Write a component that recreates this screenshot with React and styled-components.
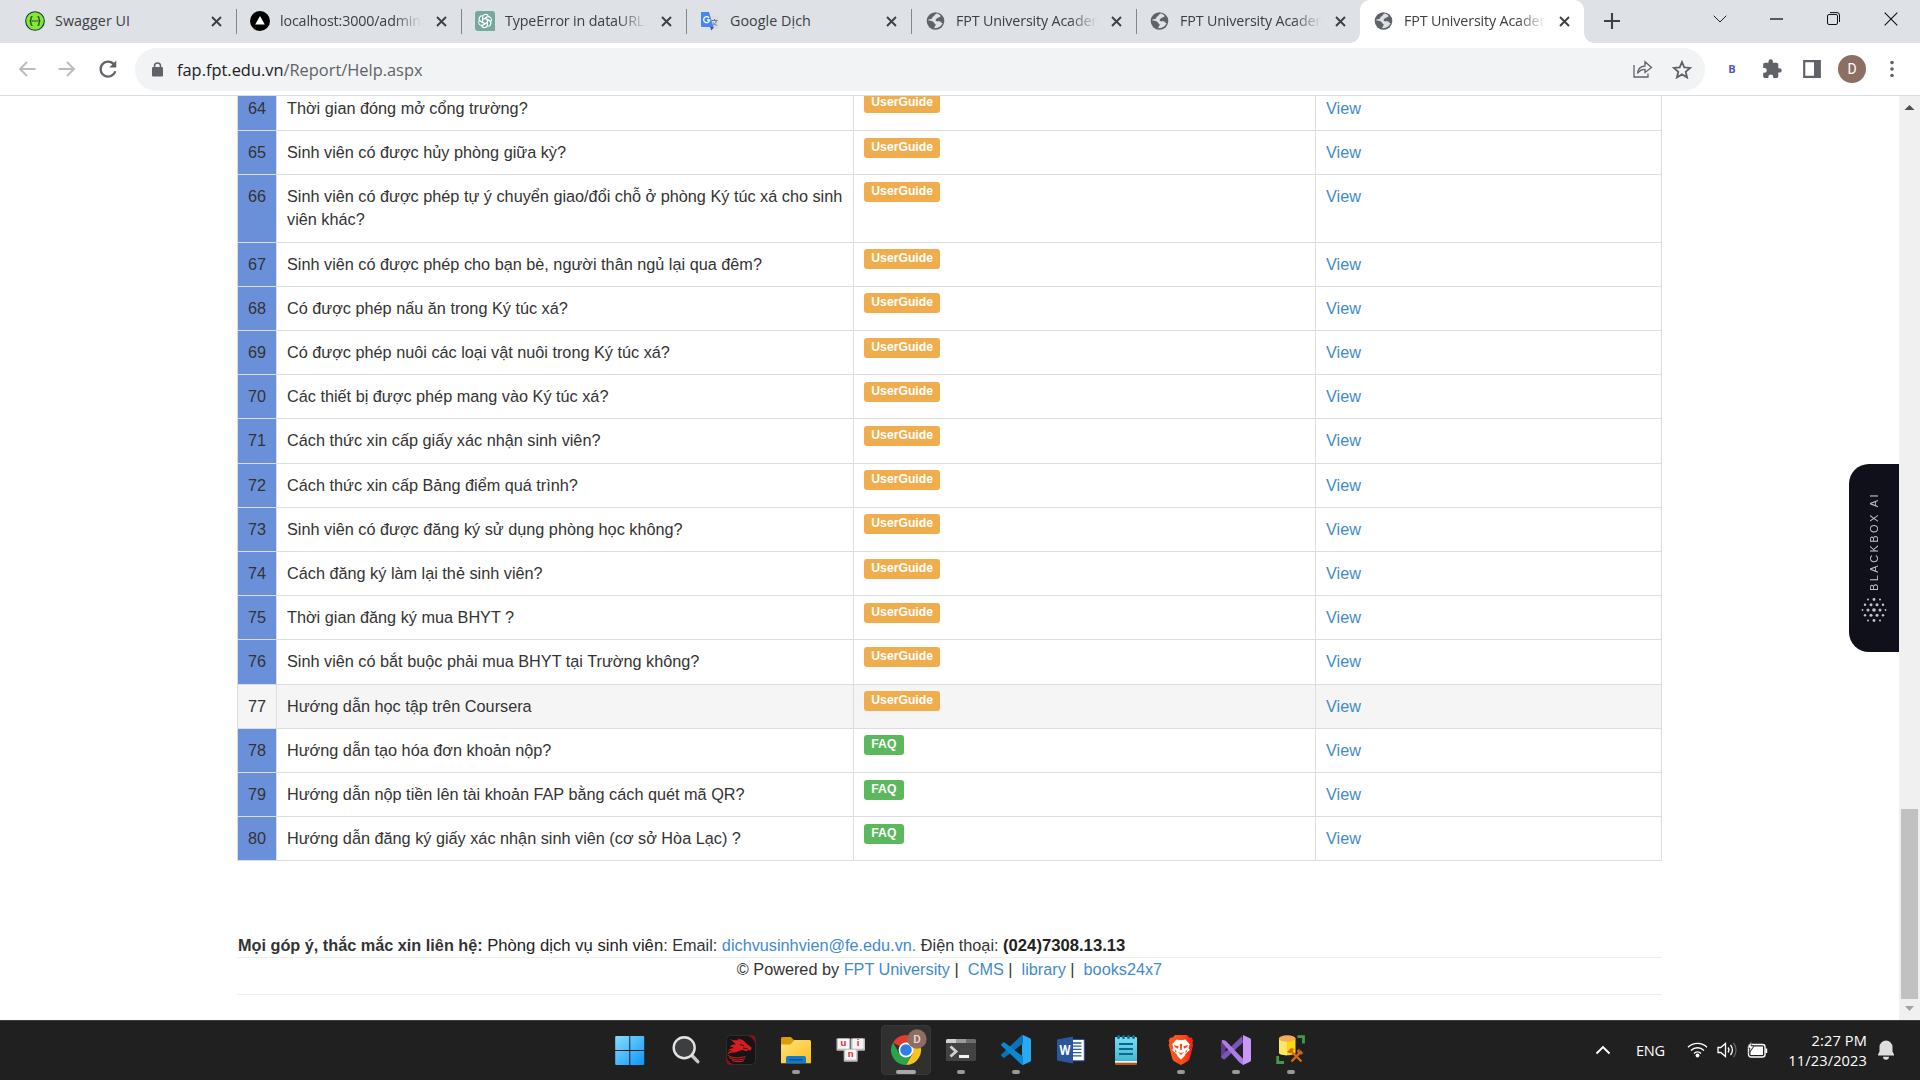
import React from "react";
import styled, { createGlobalStyle } from "styled-components";

const GlobalStyle = createGlobalStyle`
  * { box-sizing: border-box; }
  body { margin: 0; overflow: hidden; background: #fff; }
`;

const UI_FONT = '"Open Sans", "Noto Sans", sans-serif';

const Screen = styled.div`
  width: 1920px;
  height: 1080px;
  display: flex;
  flex-direction: column;
  overflow: hidden;
  font-family: "Liberation Sans", Arial, sans-serif;
`;

/* ---------- tab strip ---------- */

const TabStrip = styled.div`
  height: 43px;
  flex: none;
  display: flex;
  background: #dee1e6;
  font-family: ${UI_FONT};
`;

const Tab = styled.div`
  position: relative;
  width: ${(p) => p.$width}px;
  height: 43px;
  flex: none;
  display: flex;
  align-items: center;
  padding: 0 12px 1px ${(p) => p.$indent}px;
  border-radius: ${(p) => (p.$active ? "10px 10px 0 0" : "0")};
  background: ${(p) => (p.$active ? "#fff" : "transparent")};

  ${(p) =>
    p.$active &&
    `
    &::before, &::after {
      content: "";
      position: absolute;
      bottom: 0;
      width: 10px;
      height: 10px;
    }
    &::before { left: -10px; background: radial-gradient(circle at 0 0, transparent 9.5px, #fff 10px); }
    &::after { right: -10px; background: radial-gradient(circle at 100% 0, transparent 9.5px, #fff 10px); }
  `}
`;

const TabDivider = styled.div`
  width: 1px;
  height: 25px;
  margin-top: 9px;
  flex: none;
  background: #83868b;
`;

const Favicon = styled.svg`
  width: 20px;
  height: 20px;
  flex: none;
  margin-right: 10px;
`;

const TabTitle = styled.div`
  width: 142px;
  overflow: hidden;
  white-space: nowrap;
  font-size: 14.3px;
  letter-spacing: ${(p) => (p.$spacing === undefined ? -0.15 : p.$spacing)}px;
  line-height: 24px;
  color: #3c4043;
  ${(p) => p.$fade && "mask-image: linear-gradient(90deg, #000 80%, transparent 100%);"}
`;

const CloseIcon = styled.svg`
  width: 11px;
  height: 11px;
  flex: none;
  margin-left: auto;
  margin-right: 2px;
`;

const NewTab = styled.svg`
  width: 16px;
  height: 16px;
  margin: 13px 0 0 20px;
`;

const WindowButtons = styled.div`
  display: flex;
  margin-left: auto;
  margin-right: 1px;
  height: 37px;
  align-items: center;
`;

const WindowButton = styled.div`
  width: 57px;
  display: flex;
  justify-content: center;
`;

/* ---------- toolbar ---------- */

const Toolbar = styled.div`
  height: 53px;
  flex: none;
  display: flex;
  align-items: center;
  padding: 0 8px 0 18px;
  background: #fff;
  border-bottom: 1px solid #dadce0;
  font-family: ${UI_FONT};
`;

const NavButtons = styled.div`
  width: 117px;
  display: flex;
  gap: 22px;
  align-items: center;
`;

const AddressBar = styled.div`
  width: 1570px;
  height: 43px;
  display: flex;
  align-items: center;
  padding: 0 13px 0 17px;
  border-radius: 22px;
  background: #f1f3f4;
`;

const Url = styled.div`
  flex: 1;
  margin-left: 14px;
  padding-top: 1px;
  font-size: 16.4px;
  letter-spacing: 0;
  line-height: 24px;
  white-space: nowrap;
  color: #5f6368;

  b { font-weight: 400; color: #202124; }
`;

const AddressActions = styled.div`
  display: flex;
  gap: 19px;
  align-items: center;
`;

const Extensions = styled.div`
  margin-left: 7px;
  display: flex;
  align-items: center;
`;

const ExtensionSlot = styled.div`
  width: 40px;
  display: flex;
  justify-content: center;
`;

const ExtensionLetter = styled.span`
  width: 20px;
  text-align: center;
  font: 700 11px/20px "Open Sans", sans-serif;
  color: #5a52c8;
`;

const Avatar = styled.span`
  width: 28px;
  height: 28px;
  border-radius: 50%;
  background: #8d6e63;
  color: #fff;
  text-align: center;
  font: 400 14px/28px Roboto, sans-serif;
`;

/* ---------- page ---------- */

const Viewport = styled.div`
  position: relative;
  height: 924px;
  flex: none;
  display: flex;
  overflow: hidden;
  background: #fff;
`;

const Content = styled.div`
  width: 1899px;
  padding-left: 237px;
`;

const TableClip = styled.div`
  width: 1425px;
  height: 765.4px;
  display: flex;
  flex-direction: column;
  justify-content: flex-end;
  overflow: hidden;
`;

const Table = styled.div`
  width: 1425px;
  border-left: 1px solid #ddd;
  font-size: 16.25px;
  line-height: 23.21px;
  color: #333;
`;

const Row = styled.div`
  display: grid;
  grid-template-columns: 39px 577px 462px 346px;
  border-bottom: 1px solid #ddd;
  background: ${(p) => (p.$hover ? "#f5f5f5" : "#fff")};
`;

const Cell = styled.div`
  padding: 10px;
  border-right: 1px solid #ddd;
`;

const NumberCell = styled(Cell)`
  background: ${(p) => (p.$hover ? "#f5f5f5" : "#6b90da")};
`;

const TagCell = styled(Cell)`
  padding-top: 8px;
  line-height: 12px;
`;

const Tag = styled.span`
  font-size: 12.19px;
  font-weight: 700;
  line-height: 1;
  padding: 0.2em 0.6em 0.3em;
  border-radius: 0.25em;
  color: #fff;
  background: ${(p) => (p.$kind === "FAQ" ? "#5cb85c" : "#f0ad4e")};
`;

const Link = styled.a`
  color: #428bca;
`;

const Footer = styled.div`
  width: 1425px;
  margin-top: 72.6px;
  font-size: 16.25px;
  line-height: 23px;
  color: #333;
`;

const Contact = styled.div`
  height: 24px;
  padding-left: 1px;
  border-bottom: 1px solid #eee;
  white-space: pre;
`;

const Strong = styled.span`
  font-size: 16.67px;
  font-weight: ${(p) => (p.$bold ? 700 : 400)};
  color: #222;
`;

const Powered = styled.div`
  height: 37px;
  border-bottom: 1px solid #eee;
  text-align: center;
  white-space: pre;
`;

const ScrollTrack = styled.div`
  width: 21px;
  height: 924px;
  flex: none;
  display: flex;
  flex-direction: column;
  align-items: center;
  background: #f0f0f0;
`;

const ScrollArrow = styled.svg`
  width: 21px;
  height: 21px;
  flex: none;
`;

const ScrollThumb = styled.div`
  width: 17px;
  height: 190px;
  margin-top: 692px;
  background: #c1c1c1;
`;

const Blackbox = styled.div`
  position: absolute;
  right: 21px;
  top: 368px;
  width: 50px;
  height: 188px;
  display: flex;
  flex-direction: column;
  align-items: center;
  padding: 27px 0 0 0;
  border-radius: 20px 0 0 20px;
  background: #0f101a;
`;

const BlackboxLabel = styled.div`
  height: 100px;
  writing-mode: vertical-rl;
  transform: rotate(180deg);
  white-space: nowrap;
  font: 400 11px/14px "Liberation Sans", sans-serif;
  letter-spacing: 2.45px;
  color: #c4c4c8;
`;

/* ---------- taskbar ---------- */

const Taskbar = styled.div`
  height: 60px;
  flex: none;
  display: flex;
  background: #202020;
  border-top: 1px solid #3b3d3d;
  color: #fff;
  font-family: ${UI_FONT};
`;

const Apps = styled.div`
  display: flex;
  margin-left: 603px;
`;

const AppSlot = styled.div`
  width: 55px;
  height: 59px;
  display: flex;
  flex-direction: column;
  align-items: center;
  padding-top: 4px;
`;

const AppTile = styled.div`
  width: 50px;
  height: 50px;
  display: flex;
  flex-direction: column;
  align-items: center;
  padding-top: 10px;
  border-radius: 5px;
  background: ${(p) => (p.$active ? "#303030" : "transparent")};
  box-shadow: ${(p) => (p.$active ? "inset 0 0 0 1px #383838" : "none")};
`;

const AppIcon = styled.svg`
  width: 30px;
  height: 30px;
  flex: none;
  overflow: visible;
`;

const RunMark = styled.div`
  width: ${(p) => (p.$active ? 20 : 8)}px;
  height: 4px;
  margin-top: 5px;
  border-radius: 2px;
  background: ${(p) => (p.$active ? "#aaa7a4" : "#999")};
`;

const Tray = styled.div`
  margin-left: auto;
  width: 325px;
  height: 57px;
  display: flex;
  align-items: center;
`;

const Language = styled.div`
  width: 30px;
  margin-left: 25px;
  font-size: 14.6px;
  letter-spacing: -0.3px;
`;

const TrayIcons = styled.div`
  display: flex;
  align-items: center;
  gap: 9px;
  margin-left: 21px;
`;

const Clock = styled.div`
  width: 86px;
  margin-left: 12px;
  text-align: right;
  font-size: 14.6px;
  line-height: 20px;
  letter-spacing: 0.12px;
`;

/* ---------- drawings ---------- */

const Globe = () => (
  <Favicon viewBox="0 0 20 20">
    <circle cx="9.5" cy="10" r="8.8" fill="#5f6368" />
    <path d="M11 2.5c-2.8.8-2 2.6-3.8 3.1-1.4.5-.5 2-1.9 2.4-1.6.4-2.6 0-3.2 1.2 2 .7 5.200.5 5.700 2.400.4 1.400 2.200 1 1.800 2.600-.3 1.100-1.500 1.500-1.300 2.900 3.700.4 7-1.500 8.200-4.800-1.600-.3-1.500-1.900-3.200-2-1.600-.1-2.900.4-3.500-.9-.6-1.400 1-1.700 1.700-2.400.7-.8 2.700-.3 3.200-1.900-.8-1.300-2.100-2.200-3.700-2.600z" fill="#dee1e6" />
  </Favicon>
);

const favicons = {
  swagger: (
    <Favicon viewBox="0 0 20 20">
      <circle cx="10" cy="10" r="9.300" fill="#85ea2d" stroke="#173647" strokeWidth="1.100" />
      <path d="M7.500 5.500c-1.600 0-1.600 1-1.500 2.200.1 1.200-.2 2.200-1.400 2.300 1.200.1 1.500 1.100 1.400 2.300-.1 1.200-.1 2.200 1.500 2.200M12.500 5.500c1.600 0 1.600 1 1.500 2.200-.1 1.200.2 2.200 1.400 2.300-1.200.1-1.500 1.100-1.400 2.300.1 1.200.1 2.200-1.500 2.200" fill="none" stroke="#173647" strokeWidth="1.200" />
      <path d="M7.300 10h1.200M9.400 10h1.200M11.500 10h1.200" stroke="#173647" strokeWidth="1.300" />
    </Favicon>
  ),
  next: (
    <Favicon viewBox="0 0 20 20">
      <circle cx="10" cy="10" r="10" />
      <path d="M10 5l4.800 8.500H5.200z" fill="#fff" />
    </Favicon>
  ),
  gpt: (
    <Favicon viewBox="0 0 20 20">
      <path d="M3 0h14a3 3 0 0 1 3 3v17H3a3 3 0 0 1-3-3V3a3 3 0 0 1 3-3z" fill="#75a99c" />
      <g fill="none" stroke="#fff" strokeWidth="1.100">
        {[0, 60, 120, 180, 240, 300].map((a) => (
          <path key={a} transform={`rotate(${a} 10 10)`} d="M7.600 11.400V6.300c0-3.200 4.600-4 5.700-1.100M7.600 8.600L12 6" />
        ))}
      </g>
    </Favicon>
  ),
  translate: (
    <Favicon viewBox="0 0 20 20">
      <path d="M8 5h10.500v13.500H11z" fill="#dcdcdc" />
      <path d="M11.500 9.500h6M14.500 8v1.500M16.500 9.500c-.5 2.500-2 4-4 5M13 11.500c.8 1.300 2 2.300 4 3" stroke="#607d8b" strokeWidth="1" fill="none" />
      <path d="M10 16h4l-2.500 3.500z" fill="#3451c6" />
      <path d="M1 1h8l4.500 15H1.800A.8.800 0 0 1 1 15z" fill="#4688f1" />
      <path d="M9 6.800A3 3 0 1 0 9.600 9H7" fill="none" stroke="#fff" strokeWidth="1.300" />
    </Favicon>
  ),
  globe: <Globe />,
};

const Close = () => (
  <CloseIcon viewBox="0 0 11 11">
    <path d="M1 1l9 9M10 1l-9 9" stroke="#3c4043" strokeWidth="1.900" />
  </CloseIcon>
);

const tabs = [
  { icon: "swagger", title: "Swagger UI", width: 236, indent: 25, spacing: 0.08 },
  { icon: "next", title: "localhost:3000/admin", width: 224, indent: 13, fade: true },
  { icon: "gpt", title: "TypeError in dataURL:", width: 224, indent: 13, fade: true },
  { icon: "translate", title: "Google Dịch", width: 224, indent: 13, spacing: 0.05 },
  { icon: "globe", title: "FPT University Academic", width: 224, indent: 14, fade: true },
  { icon: "globe", title: "FPT University Academic", width: 223, indent: 13, fade: true },
  { icon: "globe", title: "FPT University Academic", width: 224, indent: 14, fade: true, active: true },
];

const rows = [
  [64, "Thời gian đóng mở cổng trường?"],
  [65, "Sinh viên có được hủy phòng giữa kỳ?"],
  [66, "Sinh viên có được phép tự ý chuyển giao/đổi chỗ ở phòng Ký túc xá cho sinh viên khác?"],
  [67, "Sinh viên có được phép cho bạn bè, người thân ngủ lại qua đêm?"],
  [68, "Có được phép nấu ăn trong Ký túc xá?"],
  [69, "Có được phép nuôi các loại vật nuôi trong Ký túc xá?"],
  [70, "Các thiết bị được phép mang vào Ký túc xá?"],
  [71, "Cách thức xin cấp giấy xác nhận sinh viên?"],
  [72, "Cách thức xin cấp Bảng điểm quá trình?"],
  [73, "Sinh viên có được đăng ký sử dụng phòng học không?"],
  [74, "Cách đăng ký làm lại thẻ sinh viên?"],
  [75, "Thời gian đăng ký mua BHYT ?"],
  [76, "Sinh viên có bắt buộc phải mua BHYT tại Trường không?"],
  [77, "Hướng dẫn học tập trên Coursera"],
  [78, "Hướng dẫn tạo hóa đơn khoản nộp?", "FAQ"],
  [79, "Hướng dẫn nộp tiền lên tài khoản FAP bằng cách quét mã QR?", "FAQ"],
  [80, "Hướng dẫn đăng ký giấy xác nhận sinh viên (cơ sở Hòa Lạc) ?", "FAQ"],
];

const Key = ({ x, y, letter }) => (
  <g>
    <rect x={x} y={y} width="14" height="12.500" rx="1" fill="#bdbdbd" />
    <rect x={x + 1.500} y={y + 0.500} width="11" height="10" rx="1" fill="#f5f5f5" />
    <text x={x + 7} y={y + 8} textAnchor="middle" fontSize="9.500" fontWeight="700" fontFamily="Liberation Sans" fill="#e8262b">{letter}</text>
  </g>
);

const apps = [
  {
    name: "start",
    art: (
      <g transform="translate(-1.300 0)">
        <linearGradient id="win" x1="0" y1="0" x2="29" y2="29" gradientUnits="userSpaceOnUse">
          <stop stopColor="#8be0ff" /><stop offset="1" stopColor="#1097f8" />
        </linearGradient>
        <path d="M.5 2A1 1 0 0 1 1.500 1H14.600V15.100H.5zM15.600 1H28.500a1 1 0 0 1 1 1V15.100H15.600zM.5 16.100H14.600V30H1.500a1 1 0 0 1-1-1zM15.600 16.100H29.500V29a1 1 0 0 1-1 1H15.600z" fill="url(#win)" />
      </g>
    ),
  },
  {
    name: "search",
    art: (
      <g fill="none" stroke="#e2e4e5">
        <path d="M20.500 20l6.300 6.700" stroke="#c6c9cc" strokeWidth="3.400" strokeLinecap="round" />
        <circle cx="13.200" cy="12.700" r="10.500" fill="#3c3e40" strokeWidth="2.400" />
      </g>
    ),
  },
  {
    name: "dragon",
    art: (
      <g>
        <rect x=".5" y=".5" width="29" height="29" rx="4" fill="#151515" stroke="#333" strokeWidth=".8" />
        <path d="M22 .7h4a3.500 3.500 0 0 1 3.500 3.500V9C28 5 26 2.500 22 .7zM.5 22c1.500 4 4 6.500 8 7.500H4a3.500 3.500 0 0 1-3.500-3.500z" fill="#8c0d1c" />
        <path d="M4 3.500c3 2.500 6 1.700 9 1.400-1-.9-2-1-3-1 3-.8 6 .3 8 2l2.500 2.700 5 4-.5 3-2.500-.6-2 1.300-4-1.300-3.500.9c-2 .8-3.500 1.700-6 1.500C4 17.500 3 18.500 1.500 19.500 2 17 4 16 6 15.600c-1.700-.5-3-.2-4.500.9C3 13.500 5 13 8 13.200 6.500 11.500 5 11.500 3.500 12c1.500-2.500 4-3 6.500-2.300C8 7 6 6.500 4 3.500z" fill="#d91c1f" />
        <path d="M1.500 20c5 4 12 3 18 1.500M3 22.500c5 3 11 3 16 1M6 25.500c4 1.500 8 1.500 12 .2" stroke="#d91c1f" strokeWidth="1" fill="none" />
        <path d="M14 9.500l4 1.300M17 13l5 1" stroke="#151515" strokeWidth=".9" />
      </g>
    ),
  },
  {
    name: "files",
    running: true,
    art: (
      <g>
        <linearGradient id="fold" x1="0" y1="0" x2="1" y2="1"><stop stopColor="#ffe17c" /><stop offset="1" stopColor="#fdbf1e" /></linearGradient>
        <path d="M0 3.500A1.500 1.500 0 0 1 1.500 2h8.300l3.300 3.200H28.500V12H0z" fill="#dc9e06" />
        <path d="M0 9.500h9.500L13.500 5H28.500A1.500 1.500 0 0 1 30 6.500V28.300H0z" fill="url(#fold)" />
        <path d="M5 28.300V23a2 2 0 0 1 2-2H23a2 2 0 0 1 2 2v5.300z" fill="#0f7bd0" />
        <path d="M8.500 24.800h13" stroke="#074c87" strokeWidth="1.300" />
      </g>
    ),
  },
  {
    name: "unikey",
    art: (
      <g>
        <Key x={0.500} y={3.300} letter="u" />
        <Key x={15} y={3.300} letter="i" />
        <Key x={7.700} y={14.200} letter="n" />
      </g>
    ),
  },
  {
    name: "chrome",
    running: true,
    active: true,
    art: (
      <g>
        <path d="M15 15L2 7.500A15 15 0 0 1 28 7.500H15z" fill="#e33b2e" />
        <path d="M15 7.500H28A15 15 0 0 1 15 30L21.500 18.700z" fill="#fcc31e" />
        <path d="M2 7.500A15 15 0 0 0 15 30l6.500-11.200L8.500 18.700z" fill="#2ba24c" />
        <circle cx="15" cy="15" r="7.400" fill="#fff" />
        <circle cx="15" cy="15" r="5.800" fill="#2f7de9" />
        <circle cx="26" cy="4" r="9.700" fill="#8d6e63" />
        <text x="26" y="8.300" textAnchor="middle" fontSize="11.500" fontFamily="Roboto" fontWeight="500" fill="#e6dedb">D</text>
      </g>
    ),
  },
  {
    name: "terminal",
    running: true,
    art: (
      <g>
        <rect x="0" y="4" width="30" height="22" rx="1.500" fill="#434343" />
        <path d="M0 8V5.500A1.500 1.500 0 0 1 1.500 4H10v4z" fill="#d0d0d0" />
        <path d="M10 4h10v4H10z" fill="#9b9b9b" />
        <path d="M20 4h8.500A1.500 1.500 0 0 1 30 5.500V8H20z" fill="#6f6f6f" />
        <path d="M4.500 11.500l5.500 5-5.500 5" fill="none" stroke="#d2d2d2" strokeWidth="2.800" />
        <path d="M13 20h10v3H13z" fill="#f2f2f2" />
      </g>
    ),
  },
  {
    name: "code",
    running: true,
    art: (
      <g>
        <path d="M22 0l7 3.200A1.800 1.800 0 0 1 30 5v20a1.800 1.800 0 0 1-1 1.800L22 30l-1-6V6z" fill="#29a9f2" />
        <path d="M22 8.500L3.700 22.500a1.300 1.300 0 0 1-1.600 0L.5 21a1.200 1.200 0 0 1 0-1.800L20.200.8A2 2 0 0 1 22 0z" fill="#0a73b8" />
        <path d="M22 21.500L3.700 7.500a1.300 1.300 0 0 0-1.600 0L.5 9a1.200 1.200 0 0 0 0 1.800L20.200 29.200A2 2 0 0 0 22 30z" fill="#0b87d0" />
      </g>
    ),
  },
  {
    name: "word",
    art: (
      <g>
        <path d="M16 4.500h11.300a1 1 0 0 1 1 1v19.300a1 1 0 0 1-1 1H16z" fill="#fff" stroke="#2b579a" />
        <path d="M17 8h8.500M17 11.200h8.500M17 14.400h8.500M17 17.600h8.500M17 20.800h8.500" stroke="#2b579a" strokeWidth="1.300" />
        <path d="M1 4.500l16-3v27l-16-3z" fill="#2b579a" />
        <text x="9" y="20" textAnchor="middle" fontSize="13.500" fontWeight="700" fontFamily="Open Sans" fill="#fff" textLength="11" lengthAdjust="spacingAndGlyphs">W</text>
      </g>
    ),
  },
  {
    name: "notepad",
    art: (
      <g>
        <path d="M4 25h22v4a1 1 0 0 1-1 1H5a1 1 0 0 1-1-1z" fill="#b05a17" />
        <path d="M4 24h22v3.700H4z" fill="#f3f3f3" />
        <linearGradient id="note" x1="0" y1="0" x2="0" y2="1"><stop stopColor="#7fdcf2" /><stop offset="1" stopColor="#44b4d6" /></linearGradient>
        <path d="M4 3a1 1 0 0 1 1-1h20a1 1 0 0 1 1 1v23H4z" fill="url(#note)" />
        <path d="M8 9h14M8 14h14M8 19h14" stroke="#066a8c" strokeWidth="1.900" />
        {[7.500, 12.500, 17.500, 22.500].map((x) => <rect key={x} x={x - 1.500} y="0" width="3" height="4" rx="1.500" fill="#0c7796" />)}
      </g>
    ),
  },
  {
    name: "brave",
    running: true,
    art: (
      <g>
        <linearGradient id="brv" x1="0" y1="0" x2="1" y2="0"><stop stopColor="#fb5b1c" /><stop offset=".6" stopColor="#fb4a1a" /><stop offset="1" stopColor="#f01a10" /></linearGradient>
        <path d="M9 0h12l2.600 2.700 2-.2 1.700 3.300-.8 2 .7 2.200-3.500 13.500c-.4 1.300-1 2-2 2.700L16 29.600a2 2 0 0 1-2.200 0L8.200 26.200c-1-.7-1.600-1.400-2-2.700L2.700 10l.7-2.200-.8-2 1.700-3.300 2 .2z" fill="url(#brv)" />
        <path d="M15 5.300l4.500-.8 4.200 4.800-1 3.500 1 2.400-4 3.200-1.200 2.500-3.500 3.800-3.500-3.800-1.200-2.500-4-3.200 1-2.400-1-3.500 4.200-4.800z" fill="#fff" />
        <path d="M8 10l4.500 1.300-.5 2.500-3-1.500zM22 10l-4.500 1.300.5 2.500 3-1.500zM13.800 9h2.400l-.5 6h-1.400zM12 17l3 1 3-1-3 3zM9.500 14.500l1.500 3-2-.8zM20.500 14.500l-1.500 3 2-.8z" fill="#fb4a1a" />
      </g>
    ),
  },
  {
    name: "studio",
    running: true,
    art: (
      <g>
        <path d="M0 8.200L3 5.500 8.500 10 4 15l4.500 5L3 24.500 0 21.800z" fill="#5c3d91" />
        <path d="M22 7.500L3.500 24.500 1 23.500 0 21.500 21 1z" fill="#7a55b8" />
        <path d="M.8 7.300A1.500 1.500 0 0 1 3 5.300l2 .7L24 26l-2 4-4-3z" fill="#ad7be6" />
        <path d="M22 0l7 3.300A1.800 1.800 0 0 1 30 5v20a1.800 1.800 0 0 1-1 1.700L22 30z" fill="#cb96fb" />
      </g>
    ),
  },
  {
    name: "database",
    running: true,
    art: (
      <g>
        <path d="M3 3.500v14c0 3.600 16.500 3.600 16.500 0v-14z" fill="#fbd80b" />
        <path d="M3 3.500v14c0 1.800 4 2.700 8 2.700V3.500z" fill="#fde766" />
        <ellipse cx="11.200" cy="3.500" rx="8.300" ry="3.200" fill="#f2ab57" />
        <path d="M21.500 1.700H27.500V8.500M1.700 21V27.500H8" fill="none" stroke="#3f9b4a" strokeWidth="2.800" />
        <path d="M15.500 26.500L25.500 16M14.500 15.500L25.500 26.500" stroke="#d96a10" strokeWidth="2.400" />
        <path d="M11 17l4-4 3.500 1-4 4.500zM23.500 13.500v4h4l-1.500 2-4-.5-1-3.500z" fill="#d96a10" />
      </g>
    ),
  },
];

function BrowserTabs() {
  return (
    <TabStrip>
      {tabs.map((tab, i) => (
        <React.Fragment key={i}>
          <Tab $width={tab.width} $indent={tab.indent} $active={tab.active}>
            {favicons[tab.icon]}
            <TabTitle $fade={tab.fade} $spacing={tab.spacing}>{tab.title}</TabTitle>
            <Close />
          </Tab>
          {i < 5 && <TabDivider />}
        </React.Fragment>
      ))}
      <NewTab viewBox="0 0 16 16"><path d="M8 0v16M0 8h16" stroke="#3c4043" strokeWidth="2.100" /></NewTab>
      <WindowButtons>
        <WindowButton><svg width="14" height="8" viewBox="0 0 14 8"><path d="M.7.700L7 7 13.300.7" fill="none" stroke="#202124" strokeWidth="1" /></svg></WindowButton>
        <WindowButton><svg width="13" height="2"><path d="M0 1h13" stroke="#111" strokeWidth="1.300" /></svg></WindowButton>
        <WindowButton><svg width="13" height="13" viewBox="0 0 13 13"><path d="M.5 4a1.500 1.500 0 0 1 1.500-1.500h7A1.500 1.500 0 0 1 10.500 4v7A1.500 1.500 0 0 1 9 12.500H2A1.500 1.500 0 0 1 .5 11zM3 .6h7A2.500 2.500 0 0 1 12.500 3v7" fill="none" stroke="#111" /></svg></WindowButton>
        <WindowButton><svg width="14" height="14" viewBox="0 0 14 14"><path d="M.7.700l12.600 12.600M13.300.7L.7 13.300" stroke="#111" strokeWidth="1.100" /></svg></WindowButton>
      </WindowButtons>
    </TabStrip>
  );
}

function BrowserToolbar() {
  return (
    <Toolbar>
      <NavButtons>
        <svg width="18" height="18" viewBox="0 0 18 18"><path d="M17.500 9H2M9 2L2 9l7 7" fill="none" stroke="#babcbe" strokeWidth="1.900" /></svg>
        <svg width="18" height="18" viewBox="0 0 18 18"><path d="M.5 9H16M9 2l7 7-7 7" fill="none" stroke="#babcbe" strokeWidth="1.900" /></svg>
        <svg width="20" height="20" viewBox="0 0 20 20"><path d="M16 5.500A7.500 7.500 0 1 0 17.300 12.300" fill="none" stroke="#5f6368" strokeWidth="2.200" /><path d="M18.300 1.500v7h-7z" fill="#5f6368" /></svg>
      </NavButtons>
      <AddressBar>
        <svg width="11" height="15" viewBox="0 0 11 15"><path d="M2.500 6V4a3 3 0 0 1 6 0v2" fill="none" stroke="#5f6368" strokeWidth="1.500" /><rect y="5" width="11" height="9.500" rx="1.200" fill="#5f6368" /></svg>
        <Url><b>fap.fpt.edu.vn</b>/Report/Help.aspx</Url>
        <AddressActions>
          <svg width="20" height="18" viewBox="0 0 20 18"><path d="M1 5v12h14v-3.500M4.500 13.500c.4-4.500 3-7.200 7.500-7.500V1.700L18.500 7.500 12 12.500V9.300c-3.200 0-5.500 1.200-7.500 4.200z" fill="none" stroke="#5f6368" strokeWidth="1.300" /></svg>
          <svg width="20" height="19" viewBox="0 0 20 19"><path d="M10 2l2.300 5.400 5.900.5-4.500 3.900 1.400 5.700L10 14.400l-5.100 3.100 1.400-5.700L1.800 7.900l5.900-.5z" fill="none" stroke="#5f6368" strokeWidth="1.800" /></svg>
        </AddressActions>
      </AddressBar>
      <Extensions>
        <ExtensionSlot><ExtensionLetter>B</ExtensionLetter></ExtensionSlot>
        <ExtensionSlot><svg width="20" height="20" viewBox="0 0 20 20"><path d="M17.500 9.200h-1.200V5.500c0-1-.8-1.800-1.800-1.800h-3.600V2.500a2.200 2.200 0 0 0-4.400 0v1.200H3C2 3.700 1.200 4.500 1.200 5.500V9h1.200a2.400 2.400 0 0 1 0 4.800H1.200v3.400c0 1 .8 1.800 1.800 1.800h3.400v-1.200a2.400 2.400 0 0 1 4.800 0V19h3.300c1 0 1.800-.8 1.800-1.800v-3.600h1.200a2.200 2.200 0 0 0 0-4.400z" fill="#5f6368" /></svg></ExtensionSlot>
        <ExtensionSlot><svg width="18" height="18" viewBox="0 0 18 18"><path d="M1.200 1.200h15.600v15.600H1.200z" fill="none" stroke="#5f6368" strokeWidth="2.200" /><path d="M11 1h6v16h-6z" fill="#5f6368" /></svg></ExtensionSlot>
        <ExtensionSlot><Avatar>D</Avatar></ExtensionSlot>
        <ExtensionSlot><svg width="20" height="18" viewBox="0 0 20 18"><g fill="#5f6368"><circle cx="10" cy="2.500" r="1.800" /><circle cx="10" cy="9" r="1.800" /><circle cx="10" cy="15.500" r="1.800" /></g></svg></ExtensionSlot>
      </Extensions>
    </Toolbar>
  );
}

const dots = [
  [-6, -10.500, 1], [0, -10.500, 1.400], [6, -10.500, 1],
  [-9, -5.300, 1.200], [-3, -5.300, 1.500], [3, -5.300, 1.500], [9, -5.300, 1.200],
  [-11.500, 0, 0.900], [-6, 0, 1.500], [0, 0, 1.800], [6, 0, 1.500], [11.500, 0, 0.900],
  [-9, 5.300, 1.200], [-3, 5.300, 1.500], [3, 5.300, 1.500], [9, 5.300, 1.200],
  [-6, 10.500, 1], [0, 10.500, 1.400], [6, 10.500, 1],
];

export default function App() {
  return (
    <Screen>
      <GlobalStyle />
      <BrowserTabs />
      <BrowserToolbar />
      <Viewport>
        <Content>
          <TableClip>
            <Table>
              {rows.map(([id, question, kind = "UserGuide"]) => (
                <Row key={id} $hover={id === 77}>
                  <NumberCell $hover={id === 77}>{id}</NumberCell>
                  <Cell>{question}</Cell>
                  <TagCell><Tag $kind={kind}>{kind}</Tag></TagCell>
                  <Cell><Link>View</Link></Cell>
                </Row>
              ))}
            </Table>
          </TableClip>
          <Footer>
            <Contact>
              <b>Mọi góp ý, thắc mắc xin liên hệ:</b> <Strong>Phòng dịch vụ sinh viên</Strong>: Email: <Link>dichvusinhvien@fe.edu.vn.</Link> Điện thoại: <Strong $bold>(024)7308.13.13</Strong>
            </Contact>
            <Powered>
              © Powered by <Link>FPT University</Link>{" |  "}<Link>CMS</Link>{" |  "}<Link>library</Link>{" |  "}<Link>books24x7</Link>
            </Powered>
          </Footer>
        </Content>
        <ScrollTrack>
          <ScrollArrow viewBox="0 0 21 21"><path d="M5.500 14h10L10.500 9z" fill="#505050" /></ScrollArrow>
          <ScrollThumb />
          <ScrollArrow viewBox="0 0 21 21"><path d="M6 7h9l-4.500 5z" fill="#a3a3a3" /></ScrollArrow>
        </ScrollTrack>
        <Blackbox>
          <BlackboxLabel>BLACKBOX AI</BlackboxLabel>
          <svg width="26" height="26" viewBox="-13 -13 26 26" style={{ marginTop: 6 }}>
            {dots.map(([x, y, r]) => <circle key={`${x},${y}`} cx={x} cy={y} r={r} fill="#c4c4c8" />)}
          </svg>
        </Blackbox>
      </Viewport>
      <Taskbar>
        <Apps>
          {apps.map((app) => (
            <AppSlot key={app.name}>
              <AppTile $active={app.active}>
                <AppIcon viewBox="0 0 30 30">{app.art}</AppIcon>
                {app.running && <RunMark $active={app.active} />}
              </AppTile>
            </AppSlot>
          ))}
        </Apps>
        <Tray>
          <svg width="16" height="10" viewBox="0 0 16 10"><path d="M1.500 8.500L8 2l6.500 6.500" fill="none" stroke="#fff" strokeWidth="1.900" /></svg>
          <Language>ENG</Language>
          <TrayIcons>
            <svg width="21" height="17" viewBox="0 0 21 17"><g fill="none" stroke="#fff" strokeWidth="1.400"><path d="M1 6.300a13.500 13.500 0 0 1 19 0M4 9.500a9.200 9.200 0 0 1 13 0M7 12.500a5 5 0 0 1 7 0" /></g><circle cx="10.500" cy="14.500" r="1.900" fill="#fff" /></svg>
            <svg width="21" height="18" viewBox="0 0 21 18"><g fill="none" stroke="#fff" strokeWidth="1.300"><path d="M1 6.500h2.800L8.500 2.500v13l-4.700-4H1z" /><path d="M11 6.500a4 4 0 0 1 0 5M13.500 4a7.500 7.500 0 0 1 0 10" /><path d="M16.500 2a11 11 0 0 1 0 14" stroke="#666" /></g></svg>
            <svg width="22" height="18" viewBox="0 0 22 18"><rect x="1.500" y="3.500" width="16.500" height="12.500" rx="2.500" fill="none" stroke="#fff" strokeWidth="1.400" /><path d="M7 5.500h9v8.500H3.500V11z" fill="#fff" /><path d="M18.500 7.500h1.700v4.500h-1.700z" fill="#fff" /><path d="M4.500 0L0 7h3l-1 4.500L7 5H4z" fill="#fff" stroke="#202020" strokeWidth=".6" /></svg>
          </TrayIcons>
          <Clock>2:27 PM<br />11/23/2023</Clock>
          <svg width="18" height="20" viewBox="0 0 18 20" style={{ marginLeft: 10 }}><path d="M9 .5a6.500 6.500 0 0 1 6.500 6.500v4.500l1.500 3v1H1v-1l1.500-3V7A6.500 6.500 0 0 1 9 .5zM6 16.700h6a3 3 0 0 1-6 0z" fill="#dedede" /></svg>
        </Tray>
      </Taskbar>
    </Screen>
  );
}
